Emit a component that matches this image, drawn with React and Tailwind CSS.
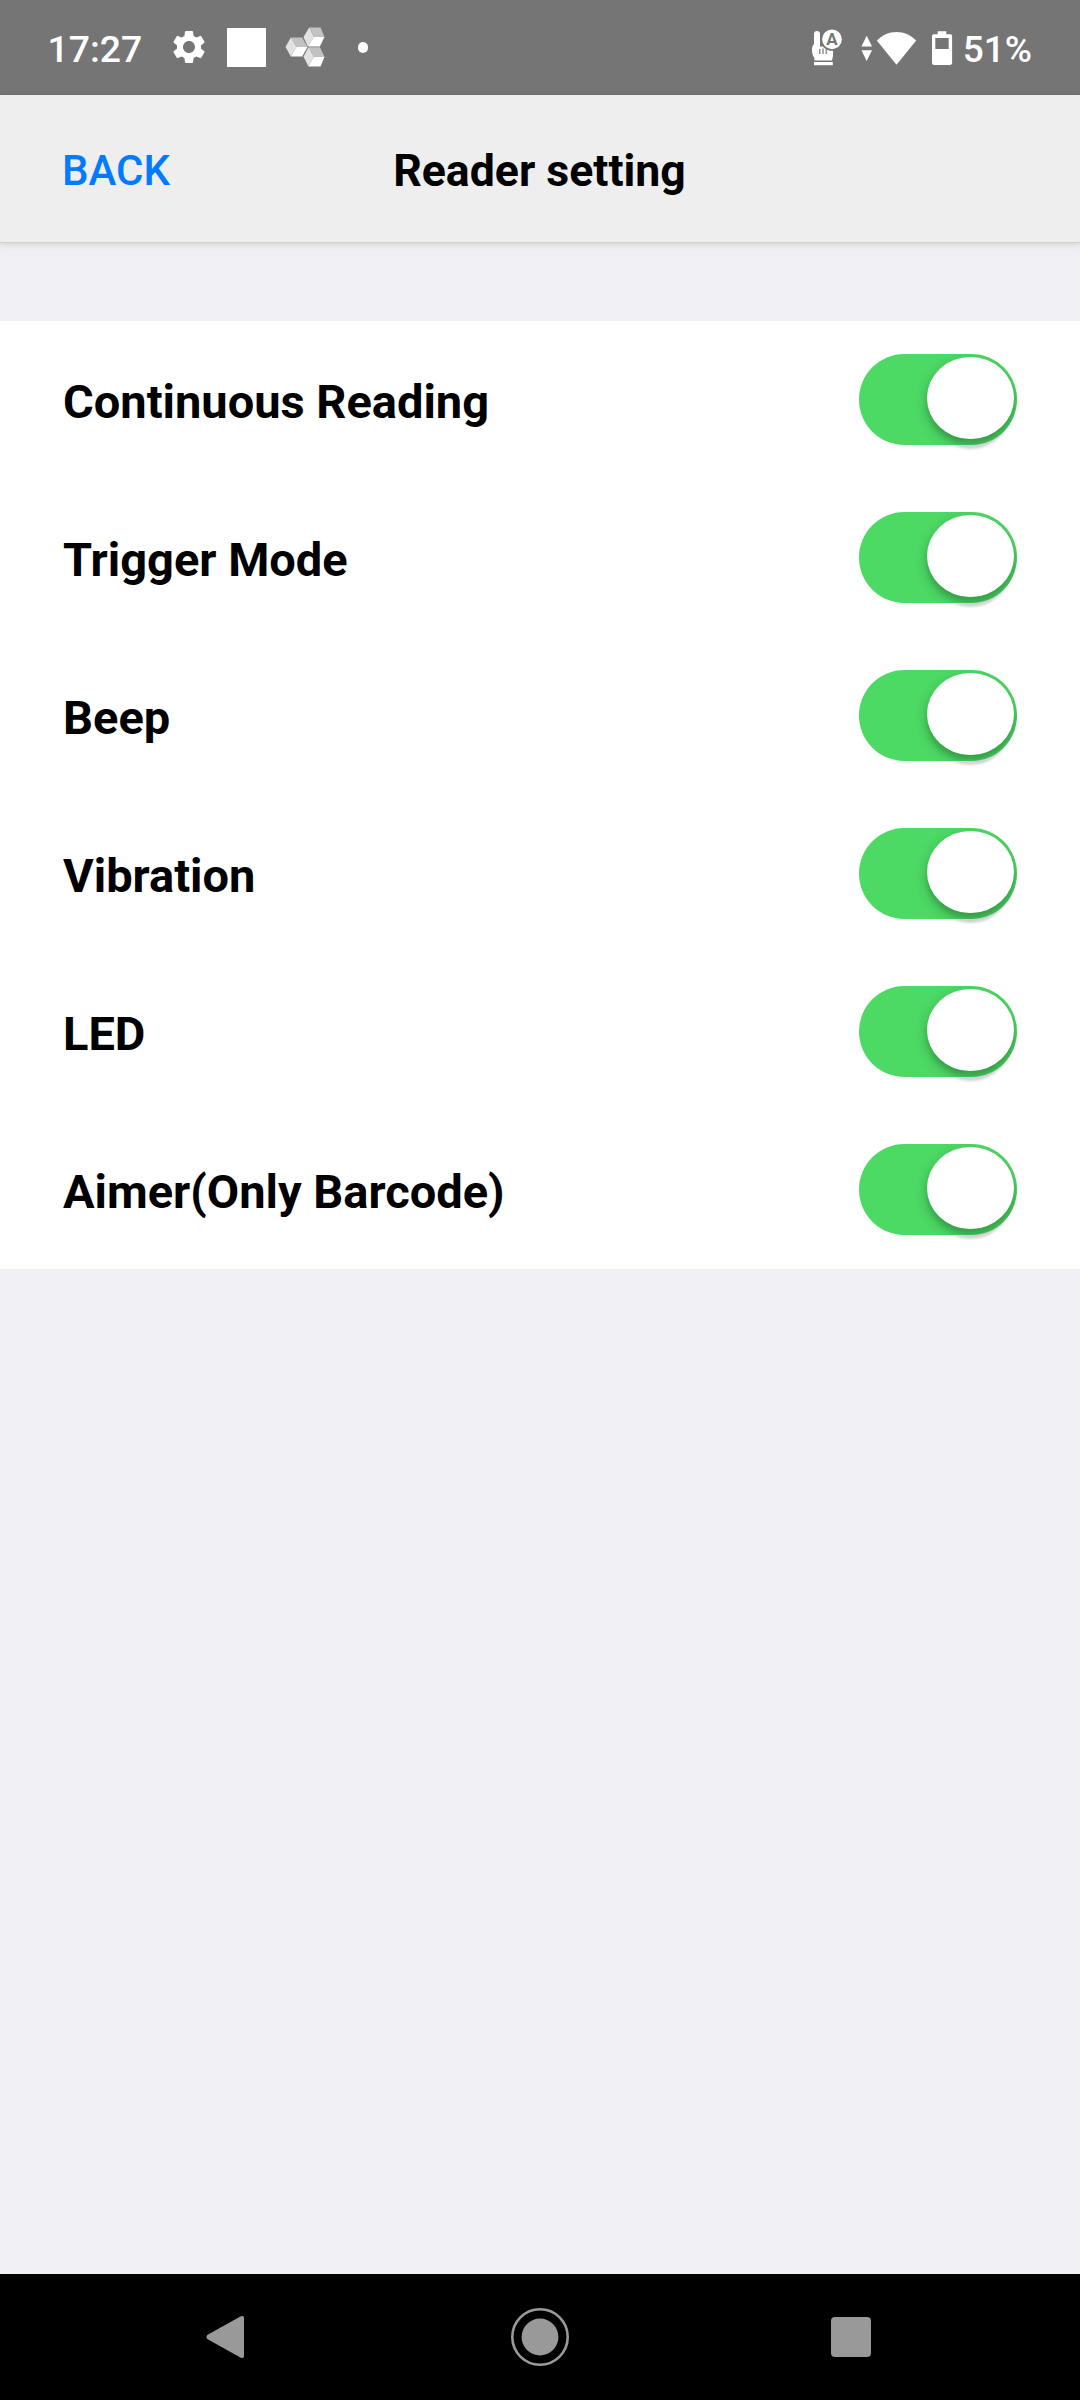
import { MdSettings } from "react-icons/md";

const SETTINGS = [
  "Continuous Reading",
  "Trigger Mode",
  "Beep",
  "Vibration",
  "LED",
  "Aimer(Only Barcode)",
];

function Cubes() {
  return (
    <svg className="h-[40px] w-[40px]" viewBox="284.5 27.5 40 40">
      <g fill="#c2c2c2">
        <path d="M308.7 28H320l4 9.5h-10.6z" />
        <path d="M290.3 38h11.4l5.3 9.4h-11z" />
        <path d="M308 47.8h11.4l4.6 9.4h-10.6z" />
      </g>
      <g fill="#e2e2e2">
        <path d="M308.7 28 303 37.4l4.3 9.6 6.1-9.5z" />
        <path d="M290.3 38 285 47.4l5.3 9.6 5.7-9.6z" />
        <path d="M308 47.8l-5 9.4 5 9.8 5.4-9.8z" />
      </g>
      <g fill="#fff">
        <path d="M313.4 37.5H324l-4.7 9.5h-12z" />
        <path d="M296 47.4h11l-5.3 9.6h-11.4z" />
        <path d="M313.4 57.2H324l-4 9.8h-12z" />
      </g>
    </svg>
  );
}

function HandIcon() {
  return (
    <svg className="h-[40px] w-[32px]" viewBox="811 27 32 40">
      <path
        fill="#fff"
        d="M814 33a3 3 0 0 1 6 0v12.5h9c2.5 0 4 1 4 3.5v6l-1 4.5h-17.6V57c-1.6-2.4-2.4-4.6-2.4-7.5 0-3.5.4-5 2-6.5z"
      />
      <path fill="#fff" d="M814 61h18.8v3.2H814z" />
      <path d="M819.8 48v5M823 47.5v5.5M826.2 48v5" stroke="#757575" strokeWidth="1.2" />
      <circle cx="832" cy="38.3" r="10.7" fill="#fff" stroke="#757575" strokeWidth="1.7" />
      <text
        x="832"
        y="44.3"
        textAnchor="middle"
        fontSize="17"
        fontWeight="700"
        fill="#757575"
        fontFamily="Roboto, sans-serif"
      >
        A
      </text>
    </svg>
  );
}

function StatusBar() {
  return (
    <div className="flex h-[95px] items-center justify-between bg-[#757575] text-white">
      <div className="flex items-center pl-[47.5px]">
        <span className="w-[121.5px] pt-[4px] text-[37.3px] leading-none font-medium">17:27</span>
        <MdSettings className="h-[40px] w-[40px]" />
        <div className="ml-[18px] h-[39px] w-[39px] bg-white" />
        <div className="ml-[18.5px]">
          <Cubes />
        </div>
        <div className="ml-[33px] h-[10.5px] w-[10.5px] rounded-full bg-white" />
      </div>
      <div className="flex items-center pr-[48px]">
        <HandIcon />
        <svg className="ml-[18px] h-[36px] w-[57px]" viewBox="861 28 57 36" fill="#fff">
          <path d="M866.7 33.8l5.3 10.7h-10.6zM861.4 48.3H872L866.7 59z" />
          <path d="M896.5 62.7 876.8 38.5c5.2-5.2 12-8.5 19.7-8.5s14.5 3.3 19.7 8.5z" />
        </svg>
        <svg className="ml-[13px] h-[36px] w-[22px]" viewBox="931 29 22 36" fill="#fff">
          <path
            fillRule="evenodd"
            d="M937.7 30.3h8.6V33.3h4a1.8 1.8 0 0 1 1.8 1.8v27a1.8 1.8 0 0 1-1.8 1.8h-16.5a1.8 1.8 0 0 1-1.8-1.8v-27a1.8 1.8 0 0 1 1.8-1.8h3.9zM935.3 37v11h13.4V37z"
          />
        </svg>
        <span className="ml-[10px] pt-[3px] text-[37px] leading-none font-medium">51%</span>
      </div>
    </div>
  );
}

function Toggle() {
  return (
    <div className="relative mt-[-1px] h-[91px] w-[158px]">
      <div className="absolute top-[13px] left-[70px] h-[82px] w-[83px] rounded-[50%] bg-[#d2d2d2] blur-[1px]" />
      <div className="absolute inset-0 overflow-hidden rounded-full bg-[#4cd964]">
        <div className="absolute top-[3px] left-[68px] h-[82px] w-[87px] rounded-[50%] shadow-[0_6px_5px_rgba(0,0,0,0.12),0_5px_14px_rgba(0,0,0,0.22)]" />
      </div>
      <div className="absolute top-[3px] left-[68px] h-[82px] w-[87px] rounded-[50%] bg-white" />
    </div>
  );
}

export default function App() {
  return (
    <div className="flex h-[2400px] w-[1080px] flex-col overflow-hidden bg-[#efeff4] font-['Roboto',sans-serif] text-black">
      <StatusBar />
      <header className="grid h-[147px] grid-cols-[1fr_auto_1fr] items-center bg-[#eeeeee] px-[62px] shadow-[0_1px_0_#d3d3d8,0_2px_7px_rgba(0,0,0,0.14)]">
        <span className="pt-[4px] text-[42px] leading-none font-medium text-[#007aff]">BACK</span>
        <h1 className="-ml-[1px] pt-[6px] text-[44.6px] leading-none font-bold">Reader setting</h1>
      </header>
      <main className="mt-[79px] flex-1">
        <div className="bg-white">
          {SETTINGS.map((name) => (
            <div key={name} className="flex h-[158px] items-center justify-between px-[63px]">
              <span className="pt-[3px] text-[47px] leading-none font-bold">{name}</span>
              <Toggle />
            </div>
          ))}
        </div>
      </main>
      <nav className="flex h-[126px] items-center justify-between bg-black pr-[209px] pl-[205px]">
        <svg className="h-[44px] w-[41px]" viewBox="205 2315 41 44" fill="#999">
          <path d="M207.2 2335 240.8 2316.3q3.2-1.3 3.2 1.7v38q0 3-3.2 1.7L207.2 2339q-1.7-2 0-4z" />
        </svg>
        <svg className="ml-[3px] h-[60px] w-[60px]" viewBox="0 0 60 60">
          <circle cx="30" cy="30" r="27.7" fill="none" stroke="#999" strokeWidth="2.6" />
          <circle cx="30" cy="30" r="18.4" fill="#999" />
        </svg>
        <div className="h-[40px] w-[40px] rounded-[4px] bg-[#999]" />
      </nav>
    </div>
  );
}
